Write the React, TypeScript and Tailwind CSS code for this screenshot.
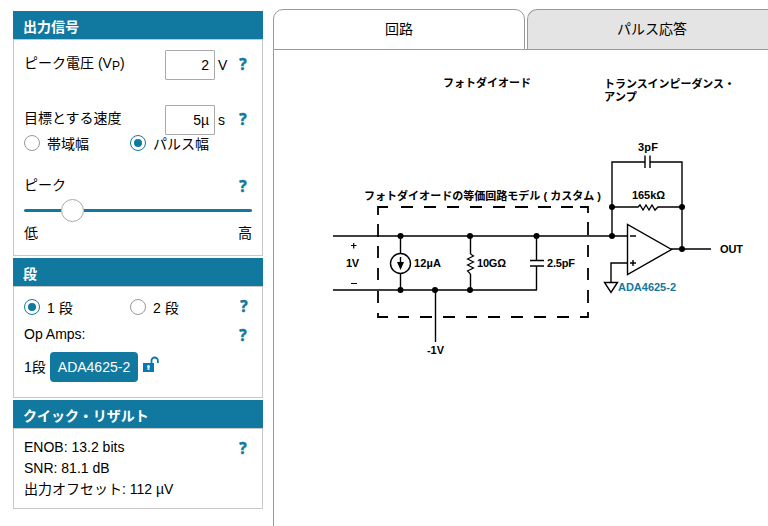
import type { ReactNode } from "react";

const cjk = "font-['Liberation_Sans','Noto_Sans_CJK_JP',sans-serif]";

function Panel({ title, className, children }: { title: string; className: string; children: ReactNode }) {
  return (
    <section className="w-[250px]">
      <h2 className="h-7 bg-[#1179a0] pl-[10px] pt-[2px] text-[14px] font-bold leading-7 text-white">
        {title}
      </h2>
      <div className={"border border-[#c8c8c8] px-[10px] " + className}>{children}</div>
    </section>
  );
}

function Help({ className = "" }: { className?: string }) {
  return (
    <button className={"h-5 w-[10px] pb-[2px] text-center font-['Open_Sans',sans-serif] text-[15.5px] font-bold leading-[18px] text-[#1179a0] [-webkit-text-stroke:0.5px_#1179a0] " + className}>
      ?
    </button>
  );
}

function Radio({ checked = false, label, className = "" }: { checked?: boolean; label: string; className?: string }) {
  return (
    <label className={"flex h-4 items-center gap-[7px] " + className}>
      <span
        className={
          "flex size-4 shrink-0 items-center justify-center rounded-full border bg-white " +
          (checked ? "border-[#1179a0]" : "border-[#999]")
        }
      >
        {checked && <span className="size-2 rounded-full bg-[#1179a0]" />}
      </span>
      <span className="relative top-px whitespace-nowrap leading-4">{label}</span>
    </label>
  );
}

function Field({ label, value, unit }: { label: ReactNode; value: string; unit: string }) {
  return (
    <div className="grid h-[30px] grid-cols-[141px_50px_23px_10px]">
      <span className="whitespace-nowrap leading-[26px]">{label}</span>
      <span className="rounded-[1px] border border-[#aaa] bg-white pr-[5px] text-right leading-7">{value}</span>
      <span className="pl-[3px] leading-[30px]">{unit}</span>
      <Help className="mt-[5px]" />
    </div>
  );
}

function Circuit() {
  const dots = [
    [400.5, 236], [470, 236], [536.5, 236], [400.5, 290], [435, 290], [470, 290],
    [612, 236], [612, 207], [682, 207], [682, 249],
  ];
  return (
    <svg width="494" height="476" viewBox="274 50 494 476" fill="none" stroke="#000" strokeWidth="1.4">
      <path d="M333 236H627M333 290H537M400.500 236V253M400.500 273V290M470.500 236V254M470.500 274V290M536.500 236V260M536.500 266V290M435.500 290V342" />
      <path d="M530 260.500H544M530 266H544" strokeWidth="1.500" />
      <path d="M470.500 254l3 2-6 3 6 3-6 3 6 3-6 3 3 3" strokeWidth="1.200" />
      <circle cx="400.500" cy="263.500" r="10" />
      <path d="M400.500 257v6" />
      <path d="M397 262h7l-3.500 8z" fill="#000" stroke="none" />
      <path d="M378 215V207H388M401 207H413M424 207H436M447 207H459M470 207H482M493 207H505M515 207H528M538 207H551M561 207H573M580 207H588V213M588 222V235M588 245V257M588 268V280M588 290V303M588 312V317H580M569 317H557M546 317H534M523 317H511M500 317H488M477 317H466M455 317H443M432 317H420M409 317H398M388 317H378V313M378 303V291M378 280V268M378 258V246M378 237V224" strokeWidth="1.800" />
      <path d="M612 236V162H645M650 162H682V249M612 207H638l2-2 3 5 3-5 3 5 3-5 3 5 3-3H682M671 249H711" />
      <path d="M645 155.500V168M650 155.500V168M627.500 224.500V274.500L671.500 249.500ZM627 263H611V282M604.500 282.500H617.500L611 292.500Z" />
      <path d="M630 236H636M630 263H636M633 260V266" strokeWidth="1.400" />
      {dots.map(([x, y]) => (
        <circle key={x + "-" + y} cx={x} cy={y} r="3" fill="#000" stroke="none" />
      ))}
      <g fill="#000" stroke="none" fontSize="11" fontWeight="700" fontFamily="'Liberation Sans','Noto Sans CJK JP',sans-serif">
        <text x="443" y="87" textLength="88" lengthAdjust="spacingAndGlyphs">フォトダイオード</text>
        <text x="604" y="88" textLength="131" lengthAdjust="spacingAndGlyphs">トランスインピーダンス・</text>
        <text x="604" y="101" textLength="33" lengthAdjust="spacingAndGlyphs">アンプ</text>
        <text x="364" y="200" textLength="237" lengthAdjust="spacingAndGlyphs">フォトダイオードの等価回路モデル ( カスタム )</text>
        <text x="638" y="151" textLength="20">3pF</text>
        <text x="632" y="199" textLength="33">165kΩ</text>
        <text x="346" y="267" textLength="13">1V</text>
        <text x="414" y="267" textLength="27">12µA</text>
        <text x="477" y="267" textLength="29">10GΩ</text>
        <text x="547" y="267" textLength="28">2.5pF</text>
        <text x="427" y="354" textLength="17">-1V</text>
        <text x="720" y="253" textLength="23">OUT</text>
        <text x="618" y="291" textLength="58" fill="#1179a0">ADA4625-2</text>
      </g>
      <path d="M351 245.500H356.500M353.700 243V248.500M351 283.500H357" strokeWidth="1.200" />
    </svg>
  );
}

export default function App() {
  return (
    <div className={"flex h-[526px] w-[768px] overflow-hidden bg-white text-[14px] text-black " + cjk}>
      <aside className="ml-[13px] mt-[11px] flex w-[250px] flex-col gap-[2px]">
        <Panel title="出力信号" className="h-[217px] pt-[10px]">
          <Field
            label={<>ピーク電圧 (V<span className="relative top-[2px] text-[12px]">P</span>)</>}
            value="2"
            unit="V"
          />
          <div className="mt-[25px]">
            <Field label="目標とする速度" value="5µ" unit="s" />
          </div>
          <div className="flex">
            <Radio label="帯域幅" className="w-[106px]" />
            <Radio label="パルス幅" checked />
          </div>
          <div className="mt-[24px] flex h-[23px] justify-between pr-1">
            <span className="leading-5">ピーク</span>
            <Help className="mt-[2px]" />
          </div>
          <div className="flex h-6 items-center pt-px">
            <div className="h-[3px] w-[37px] rounded-l bg-[#1179a0]" />
            <div className="size-[23px] rounded-full border border-[#aaa] bg-white" />
            <div className="h-[3px] flex-1 rounded-r bg-[#1179a0]" />
          </div>
          <div className="mt-px flex justify-between leading-5">
            <span>低</span>
            <span>高</span>
          </div>
        </Panel>

        <Panel title="段" className="h-[112px] pt-[10px]">
          <div className="flex h-5 items-center pr-[3px]">
            <Radio label="1 段" checked className="w-[106px]" />
            <Radio label="2 段" />
            <Help className="ml-auto" />
          </div>
          <div className="mt-[7px] flex h-5 justify-between pr-1 leading-5">
            <span>Op Amps:</span>
            <Help className="mt-[2px]" />
          </div>
          <div className="mt-[8px] flex h-[30px]">
            <span className="w-[26px] whitespace-nowrap leading-[30px]">1段</span>
            <button className="w-[88px] rounded-[4px] bg-[#1179a0] text-white">ADA4625-2</button>
            <svg className="ml-[5px] mt-[4px]" width="17" height="17" viewBox="0 0 17 17">
              <path d="M8.500 7V4.500a3.200 3 0 0 1 6.400 0V7" fill="none" stroke="#0878b5" strokeWidth="1.800" />
              <path d="M0 7h11v9H0z" fill="#0878b5" />
              <path d="M4.500 9h2v5h-2zM4 10h3v1.500H4z" fill="#d3e9f4" />
            </svg>
          </div>
        </Panel>

        <Panel title="クイック・リザルト" className="flex h-[81px] justify-between pr-[14px] pt-[8px]">
          <div className="leading-[21px]">
            <p>ENOB: 13.2 bits</p>
            <p>SNR: 81.1 dB</p>
            <p>出力オフセット: 112 µV</p>
          </div>
          <Help className="mt-[2px]" />
        </Panel>
      </aside>

      <main className="ml-[10px] mt-[9px] flex w-[495px] shrink-0 flex-col">
        <nav className="flex h-[41px] shrink-0 text-[14px] leading-[39px]">
          <button className="w-[252px] rounded-t-[10px] border border-[#999]">回路</button>
          <div className="w-[2px] border-b border-[#999]" />
          <button className="w-[241px] rounded-tl-[10px] border border-r-0 border-[#999] bg-[#e4e4e4] pl-[8px]">パルス応答</button>
        </nav>
        <div className="border-l border-[#999]">
          <Circuit />
        </div>
      </main>
    </div>
  );
}
